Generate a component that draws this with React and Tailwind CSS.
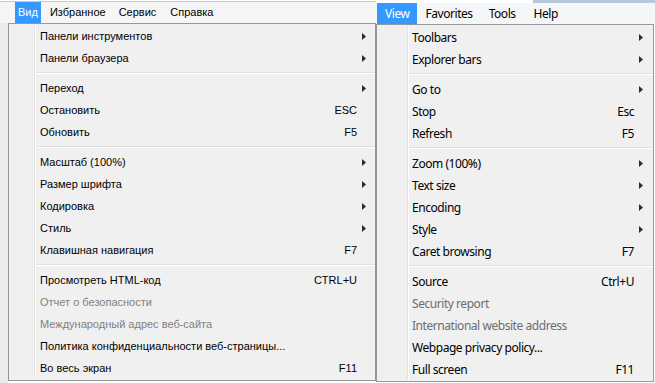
import React from 'react';

const leftItems = [
    { label: 'Панели инструментов', arrow: true },
    { label: 'Панели браузера', arrow: true },
    'sep',
    { label: 'Переход', arrow: true },
    { label: 'Остановить', shortcut: 'ESC' },
    { label: 'Обновить', shortcut: 'F5' },
    'sep',
    { label: 'Масштаб (100%)', arrow: true },
    { label: 'Размер шрифта', arrow: true },
    { label: 'Кодировка', arrow: true },
    { label: 'Стиль', arrow: true },
    { label: 'Клавишная навигация', shortcut: 'F7' },
    'sep',
    { label: 'Просмотреть HTML-код', shortcut: 'CTRL+U' },
    { label: 'Отчет о безопасности', disabled: true },
    { label: 'Международный адрес веб-сайта', disabled: true },
    { label: 'Политика конфиденциальности веб-страницы...' },
    { label: 'Во весь экран', shortcut: 'F11' },
];

const rightItems = [
    { label: 'Toolbars', arrow: true },
    { label: 'Explorer bars', arrow: true },
    'sep',
    { label: 'Go to', arrow: true },
    { label: 'Stop', shortcut: 'Esc' },
    { label: 'Refresh', shortcut: 'F5' },
    'sep',
    { label: 'Zoom (100%)', arrow: true },
    { label: 'Text size', arrow: true },
    { label: 'Encoding', arrow: true },
    { label: 'Style', arrow: true },
    { label: 'Caret browsing', shortcut: 'F7' },
    'sep',
    { label: 'Source', shortcut: 'Ctrl+U' },
    { label: 'Security report', disabled: true },
    { label: 'International website address', disabled: true },
    { label: 'Webpage privacy policy...' },
    { label: 'Full screen', shortcut: 'F11' },
];

const Arrow = () => (
    <svg width="4" height="7" viewBox="0 0 4 7" className="block">
        <path d="M0 0 L4 3.5 L0 7 Z" fill="#2b2b2b" />
    </svg>
);

// one dropdown: gutter column + item column
const Dropdown = ({ items, gutter, textPad, arrowCol, font, disabledText }) => (
    <div className={`flex border border-[#979797] bg-[#f0f0f0] py-px ${font}`}>
        <div className={`${gutter} shrink-0`} />
        <div className="w-px shrink-0 bg-[#e2e3e3]" />
        <div className="w-px shrink-0 bg-white" />
        <div className="flex flex-1 flex-col">
            {items.map((item, i) =>
                item === 'sep' ? (
                    <div key={i} className="flex h-[8px] flex-col justify-center">
                        <div className="h-px bg-[#e0e0e0]" />
                        <div className="h-px bg-white" />
                    </div>
                ) : (
                    <div
                        key={i}
                        className={`flex h-[22px] items-center ${textPad} ${item.disabled ? disabledText : 'text-black'}`}
                    >
                        <span className="whitespace-nowrap">{item.label}</span>
                        <span className="ml-auto whitespace-nowrap">{item.shortcut}</span>
                        <div className={`${arrowCol} flex items-center`}>{item.arrow && <Arrow />}</div>
                    </div>
                )
            )}
        </div>
    </div>
);

export default function App() {
    return (
        <div className="flex h-[383px] w-[655px] overflow-hidden bg-white">
            {/* Russian menu */}
            <div className="flex w-[376px] shrink-0 flex-col">
                <div className="flex h-[23px] flex-col">
                    <div className="h-px bg-white" />
                    <div className="h-px bg-[#c9c9c9]" />
                    <div className="flex flex-1 items-stretch bg-[#f5f5f5] pl-[15px] font-['Liberation_Sans',sans-serif] text-[11px] text-black">
                        <div className="flex items-center bg-[#3399ff] px-[3px] text-white">Вид</div>
                        <div className="ml-[6px] flex items-center px-[3px]">Избранное</div>
                        <div className="ml-[7px] flex items-center px-[3px]">Сервис</div>
                        <div className="ml-[8px] flex items-center px-[3px]">Справка</div>
                    </div>
                </div>
                <div className="flex flex-1">
                    <div className="w-[8px] shrink-0 bg-[#ebebeb]" />
                    <div className="flex-1">
                        <Dropdown
                            items={leftItems}
                            gutter="w-[25px]"
                            textPad="pl-[4px]"
                            arrowCol="w-[18px] shrink-0 pl-[5px]"
                            font="font-['Liberation_Sans',sans-serif] text-[11px]"
                            disabledText="text-[#808080]"
                        />
                    </div>
                </div>
            </div>

            {/* English menu */}
            <div className="flex flex-1 flex-col">
                <div className="flex h-[24px] flex-col">
                    <div className="flex h-[3px]">
                        <div className="w-[157px] bg-white" />
                        <div className="flex-1 bg-[#b8c8dc]" />
                    </div>
                    <div className="flex flex-1 items-stretch bg-[#f5f6f7] pl-px font-['Noto_Sans',sans-serif] text-[12px] tracking-[-0.45px] text-black">
                        <div className="flex items-center bg-[#3399ff] px-[8px] pt-px text-white">View</div>
                        <div className="ml-px flex items-center px-[7px] pt-px">Favorites</div>
                        <div className="ml-[2px] flex items-center px-[7px] pt-px">Tools</div>
                        <div className="ml-[4px] flex items-center px-[7px] pt-px">Help</div>
                    </div>
                </div>
                <div className="flex-1 pr-px">
                    <Dropdown
                        items={rightItems}
                        gutter="w-[30px]"
                        textPad="pl-[3px] pt-[2px]"
                        arrowCol="w-[19px] shrink-0 pl-[5px] -mt-[2px]"
                        font="font-['Noto_Sans',sans-serif] text-[12px] tracking-[-0.45px]"
                        disabledText="text-[#6d6d6d]"
                    />
                </div>
            </div>
        </div>
    );
}
